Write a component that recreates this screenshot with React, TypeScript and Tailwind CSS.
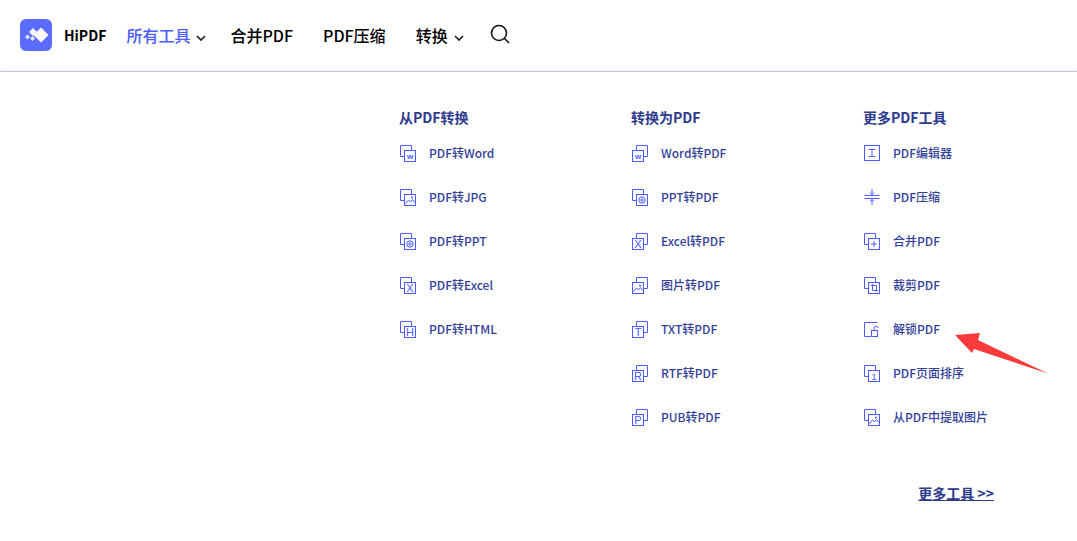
import React from "react";

const BLUE = "#4a5cff";

type Variant = "right" | "left";

// two overlapping sheets, the front one holds the glyph
const Sheets: React.FC<{ variant?: Variant; children?: React.ReactNode }> = ({ variant = "right", children }) => (
  <svg width="18" height="18" viewBox="0 0 18 18" fill="none" stroke={BLUE} strokeWidth="1" className="shrink-0">
    {variant === "right" ? (
      <>
        <path d="M5.5 12.5H1.5V1.5H12.5V6.5" />
        <rect x="5.5" y="6.5" width="11" height="11" />
      </>
    ) : (
      <>
        <path d="M5.5 6.5V1.5H16.5V12.5H12.5" />
        <rect x="1.5" y="6.5" width="11" height="11" />
      </>
    )}
    {children}
  </svg>
);

const Letter: React.FC<{ x: number; y: number; size?: number; bold?: boolean; children: string }> = ({
  x,
  y,
  size = 11,
  bold,
  children,
}) => (
  <text
    x={x}
    y={y}
    fontSize={size}
    fontWeight={bold ? 700 : 400}
    fill={BLUE}
    stroke="none"
    textAnchor="middle"
    fontFamily="'Liberation Sans', sans-serif"
  >
    {children}
  </text>
);

const Picture = ({ ox = 0, oy = 0 }: { ox?: number; oy?: number }) => (
  <g transform={`translate(${ox} ${oy})`} strokeWidth="1">
    <path d="M6.5 15.5L9.5 12L11.5 14L13.5 11.5L16 14.5" />
    <circle cx="13" cy="9.5" r="1" fill={BLUE} stroke="none" />
  </g>
);

const At = ({ cx = 11, cy = 12 }: { cx?: number; cy?: number }) => (
  <g strokeWidth="1">
    <circle cx={cx} cy={cy} r="3.2" />
    <circle cx={cx} cy={cy} r="1.2" />
  </g>
);

const columns: { title: string; items: { label: string; icon: React.ReactNode }[] }[] = [
  {
    title: "从PDF转换",
    items: [
      { label: "PDF转Word", icon: <Sheets><Letter x={11} y={15} size={8} bold>w</Letter></Sheets> },
      { label: "PDF转JPG", icon: <Sheets><Picture /></Sheets> },
      { label: "PDF转PPT", icon: <Sheets><At /></Sheets> },
      { label: "PDF转Excel", icon: <Sheets><Letter x={11} y={16}>X</Letter></Sheets> },
      { label: "PDF转HTML", icon: <Sheets><Letter x={11} y={16}>H</Letter></Sheets> },
    ],
  },
  {
    title: "转换为PDF",
    items: [
      { label: "Word转PDF", icon: <Sheets variant="left"><Letter x={7} y={15} size={8} bold>w</Letter></Sheets> },
      { label: "PPT转PDF", icon: <Sheets><At /></Sheets> },
      { label: "Excel转PDF", icon: <Sheets variant="left"><Letter x={7} y={16}>X</Letter></Sheets> },
      {
        label: "图片转PDF",
        icon: (
          <Sheets variant="left">
            <Picture ox={-4} />
          </Sheets>
        ),
      },
      { label: "TXT转PDF", icon: <Sheets variant="left"><Letter x={7} y={16}>T</Letter></Sheets> },
      { label: "RTF转PDF", icon: <Sheets variant="left"><Letter x={7} y={16}>R</Letter></Sheets> },
      { label: "PUB转PDF", icon: <Sheets variant="left"><Letter x={7} y={16}>P</Letter></Sheets> },
    ],
  },
  {
    title: "更多PDF工具",
    items: [
      {
        label: "PDF编辑器",
        icon: (
          <svg width="18" height="18" viewBox="0 0 18 18" fill="none" stroke={BLUE} className="shrink-0">
            <rect x="1.5" y="1.5" width="15" height="15" />
            <path d="M5.5 5.5H12.5M5.5 12.5H12.5M9 5.5V12.5" />
          </svg>
        ),
      },
      {
        label: "PDF压缩",
        icon: (
          <svg width="18" height="18" viewBox="0 0 18 18" fill="none" stroke={BLUE} className="shrink-0">
            <path d="M1.5 7.5H16.5M1.5 10.5H16.5" />
            <path d="M9 1V6.5M9 11.5V17M7 4.5L9 6.5L11 4.5M7 13.5L9 11.5L11 13.5" />
          </svg>
        ),
      },
      {
        label: "合并PDF",
        icon: <Sheets><path d="M11 9V15M8 12H14" /></Sheets>,
      },
      {
        label: "裁剪PDF",
        icon: <Sheets><path d="M8 9.5H13.5V15.5M9.5 8V14.5H15" /></Sheets>,
      },
      {
        label: "解锁PDF",
        icon: (
          <svg width="18" height="18" viewBox="0 0 18 18" fill="none" stroke={BLUE} className="shrink-0">
            <path d="M7.5 16.5H1.5V2.5H14.5" />
            <rect x="8.5" y="10.5" width="6" height="6" />
            <path d="M11 10.5V8.5A2 2 0 0 1 15 8" />
          </svg>
        ),
      },
      { label: "PDF页面排序", icon: <Sheets><Letter x={11} y={16} size={9}>1</Letter></Sheets> },
      { label: "从PDF中提取图片", icon: <Sheets variant="right"><Picture /></Sheets> },
    ],
  },
];

const Chevron = () => (
  <svg width="10" height="6" viewBox="0 0 10 6" fill="none" stroke="#222" strokeWidth="1.7" className="ml-[6px] mt-[7px]">
    <path d="M1 1L5 5L9 1" />
  </svg>
);

const NavItem: React.FC<{ label: string; active?: boolean; chevron?: boolean; className?: string }> = ({
  label,
  active,
  chevron,
  className,
}) => (
  <div className={`flex items-center ${className ?? ""}`}>
    <span className={`text-base font-medium leading-[24px] ${active ? "text-[#4a5cff]" : "text-black"}`}>{label}</span>
    {chevron && <Chevron />}
  </div>
);

export default function App() {
  return (
    <div className="relative h-[541px] w-[1077px] overflow-hidden bg-white font-['Noto_Sans_CJK_SC','Noto_Sans',sans-serif]">
      {/* Header */}
      <header className="flex h-[72px] items-center border-b border-[#c5c3dd] pb-[2px] pl-[20px] shadow-[inset_0_-8px_8px_-8px_#f0f0fb]">
        <div className="flex h-[32px] w-[32px] items-center justify-center rounded-[6px] bg-[#5a6bff]">
          <svg width="26" height="18" viewBox="0 0 26 18" fill="white">
            <path d="M18 1.5L25.5 9L18 16.5L10.5 9Z" />
            <path d="M10 2L14 6L10 10L6 6Z" opacity="0.95" />
            <path d="M4.5 8.5L7 11L4.5 13.5L2 11Z" opacity="0.85" />
            <path d="M9.5 10L12 12.5L9.5 15L7 12.5Z" opacity="0.85" />
          </svg>
        </div>
        <span className="ml-[12px] text-sm font-bold leading-[24px] text-black">HiPDF</span>
        <NavItem label="所有工具" active chevron className="ml-[20px]" />
        <NavItem label="合并PDF" className="ml-[24px]" />
        <NavItem label="PDF压缩" className="ml-[30px]" />
        <NavItem label="转换" chevron className="ml-[30px]" />
        <svg width="20" height="20" viewBox="0 0 20 20" fill="none" stroke="#111" strokeWidth="1.6" className="mb-[1px] ml-[26px]">
          <circle cx="9" cy="9" r="7.5" />
          <path d="M14.5 14.5L19 19" />
        </svg>
      </header>

      {/* Dropdown columns */}
      <main className="flex pl-[399px] pt-[35px]">
        {columns.map((col) => (
          <section key={col.title} className="w-[232px] shrink-0">
            <h3 className="text-sm font-bold leading-[20px] text-[#2e3a8c]">{col.title}</h3>
            <ul className="mt-[4px]">
              {col.items.map((item) => (
                <li key={item.label} className="flex h-[44px] items-center">
                  {item.icon}
                  <span className="ml-[12px] text-xs font-medium text-[#333f9a]">{item.label}</span>
                </li>
              ))}
            </ul>
          </section>
        ))}
      </main>

      <div className="mt-[44px] flex justify-end pr-[83px]">
        <a className="text-sm font-bold leading-[20px] text-[#2e3a8c] underline">更多工具 &gt;&gt;</a>
      </div>

      {/* Red annotation arrow */}
      <svg className="absolute left-[950px] top-[328px]" width="100" height="50" viewBox="950 328 100 50">
        <path d="M955 335L980 333L978 340L1048 373.5L974 349L972 353Z" fill="#fb3b3b" />
      </svg>
    </div>
  );
}
